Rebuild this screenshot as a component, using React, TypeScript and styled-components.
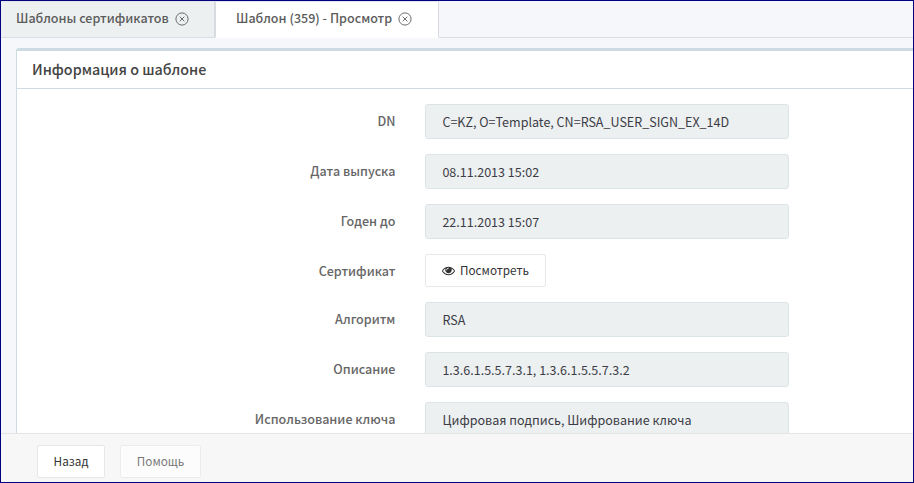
import React from "react";
import styled, { createGlobalStyle } from "styled-components";

const GlobalStyle = createGlobalStyle`
  * { box-sizing: border-box; }
  body { margin: 0; }
`;

const Window = styled.div`
  display: flex;
  flex-direction: column;
  width: 914px;
  height: 483px;
  overflow: hidden;
  border: 1px solid #000080;
  background: #f5f7fb;
  color: #3c3c46;
  font-family: "Noto Sans CJK SC", "Noto Sans", sans-serif;
  font-size: 12.54px;
  line-height: 20px;
  white-space: nowrap;
`;

const Tabs = styled.nav`
  display: flex;
  flex: none;
  height: 37px;
`;

const Tab = styled.div<{ $active?: boolean; $width: number }>`
  display: flex;
  align-items: flex-start;
  gap: 6px;
  width: ${(p) => p.$width}px;
  padding: 6px 0 0 ${(p) => (p.$active ? 20 : 15)}px;
  border-top: 1px solid #e2e5e9;
  border-right: 1px solid #d8dbe0;
  border-bottom: 1px solid ${(p) => (p.$active ? "#ffffff" : "#d8dfe2")};
  border-left: ${(p) => (p.$active ? "1px solid #d8dbe0" : "none")};
  background: ${(p) => (p.$active ? "#ffffff" : "#ecf0f1")};
  color: #5c5c5c;
  font-weight: 500;
`;

const TabFiller = styled.div`
  flex: 1;
  border-bottom: 1px solid #dadce0;
`;

const CloseSvg = styled.svg`
  flex: none;
  margin-top: 4px;
`;

const Body = styled.main`
  display: flex;
  flex: 1;
  min-height: 0;
  padding: 10px 0 0 15px;
`;

const Panel = styled.section`
  flex: 1;
  overflow: hidden;
  border-top: 3px solid #cddce2;
  border-left: 1px solid #cddce2;
  border-top-left-radius: 3px;
  background: #ffffff;
`;

const PanelTitle = styled.h1`
  height: 38px;
  margin: 0;
  padding: 7px 0 0 15px;
  border-bottom: 1px solid #cddce2;
  color: #444444;
  font-size: 14.32px;
  font-weight: 500;
  line-height: 22px;
`;

const Form = styled.div`
  display: flex;
  flex-direction: column;
  gap: 15px;
  padding-top: 15px;
`;

const Row = styled.div`
  display: grid;
  grid-template-columns: 379px 364px;
  column-gap: 29px;
`;

const Label = styled.label`
  padding: 7px 0.6px 0 0;
  color: #666666;
  font-weight: 500;
  text-align: right;
`;

const Value = styled.div`
  height: 35px;
  padding: 7px 16.4px;
  border: 1px solid #dce4e8;
  border-radius: 3px;
  background: #ecf0f1;
`;

const Button = styled.button<{ $width: number }>`
  display: inline-flex;
  align-items: center;
  justify-content: center;
  gap: 5px;
  width: ${(p) => p.$width}px;
  height: 33px;
  padding: 0 0 1px;
  border: 1px solid #e7e7e7;
  border-radius: 2px;
  background: #ffffff;
  color: #333333;
  font-family: inherit;
  font-size: 11.75px;
  line-height: 20px;

  &:disabled {
    opacity: 0.65;
  }
`;

const Footer = styled.footer`
  display: flex;
  flex: none;
  gap: 15px;
  height: 49px;
  padding: 11px 0 0 36px;
  border-top: 1px solid #e3e4e5;
  background: #f7f7f7;
`;

const CloseIcon = () => (
  <CloseSvg width="14" height="14" viewBox="0 0 14 14" fill="none" stroke="#5c5c5c">
    <circle cx="7" cy="7" r="6.1" strokeWidth="0.9" />
    <path d="M4.7 4.7l4.6 4.6M9.3 4.7l-4.6 4.6" strokeWidth="0.9" />
  </CloseSvg>
);

const EyeIcon = () => (
  <svg width="13" height="13" viewBox="0 0 1792 1792" fill="currentColor">
    <path d="M1664 960q-152-236-381-353 61 104 61 225 0 185-131.5 316.5t-316.5 131.5-316.5-131.5-131.5-316.5q0-121 61-225-229 117-381 353 133 205 333.5 326.5t434.500 121.500 434.500-121.500 333.500-326.500zm-720-384q0-20-14-34t-34-14q-125 0-214.500 89.500t-89.500 214.500q0 20 14 34t34 14 34-14 14-34q0-86 61-147t147-61q20 0 34-14t14-34zm848 384q0 34-20 69-140 230-376.500 368.500t-499.500 138.500-499.500-139-376.500-368q-20-35-20-69t20-69q140-229 376.500-368t499.500-139 499.500 139 376.500 368q20 35 20 69z" />
  </svg>
);

const Field = ({ label, value }: { label: string; value: string }) => (
  <Row>
    <Label>{label}</Label>
    <Value>{value}</Value>
  </Row>
);

export default function App() {
  return (
    <>
      <GlobalStyle />
      <Window>
        <Tabs>
          <Tab $width={214}>Шаблоны сертификатов<CloseIcon /></Tab>
          <Tab $active $width={224}>Шаблон (359) - Просмотр<CloseIcon /></Tab>
          <TabFiller />
        </Tabs>
        <Body>
          <Panel>
            <PanelTitle>Информация о шаблоне</PanelTitle>
            <Form>
              <Field label="DN" value="C=KZ, O=Template, CN=RSA_USER_SIGN_EX_14D" />
              <Field label="Дата выпуска" value="08.11.2013 15:02" />
              <Field label="Годен до" value="22.11.2013 15:07" />
              <Row>
                <Label>Сертификат</Label>
                <Button $width={121}><EyeIcon />Посмотреть</Button>
              </Row>
              <Field label="Алгоритм" value="RSA" />
              <Field label="Описание" value="1.3.6.1.5.5.7.3.1, 1.3.6.1.5.5.7.3.2" />
              <Field label="Использование ключа" value="Цифровая подпись, Шифрование ключа" />
            </Form>
          </Panel>
        </Body>
        <Footer>
          <Button $width={68}>Назад</Button>
          <Button $width={81} disabled>Помощь</Button>
        </Footer>
      </Window>
    </>
  );
}
